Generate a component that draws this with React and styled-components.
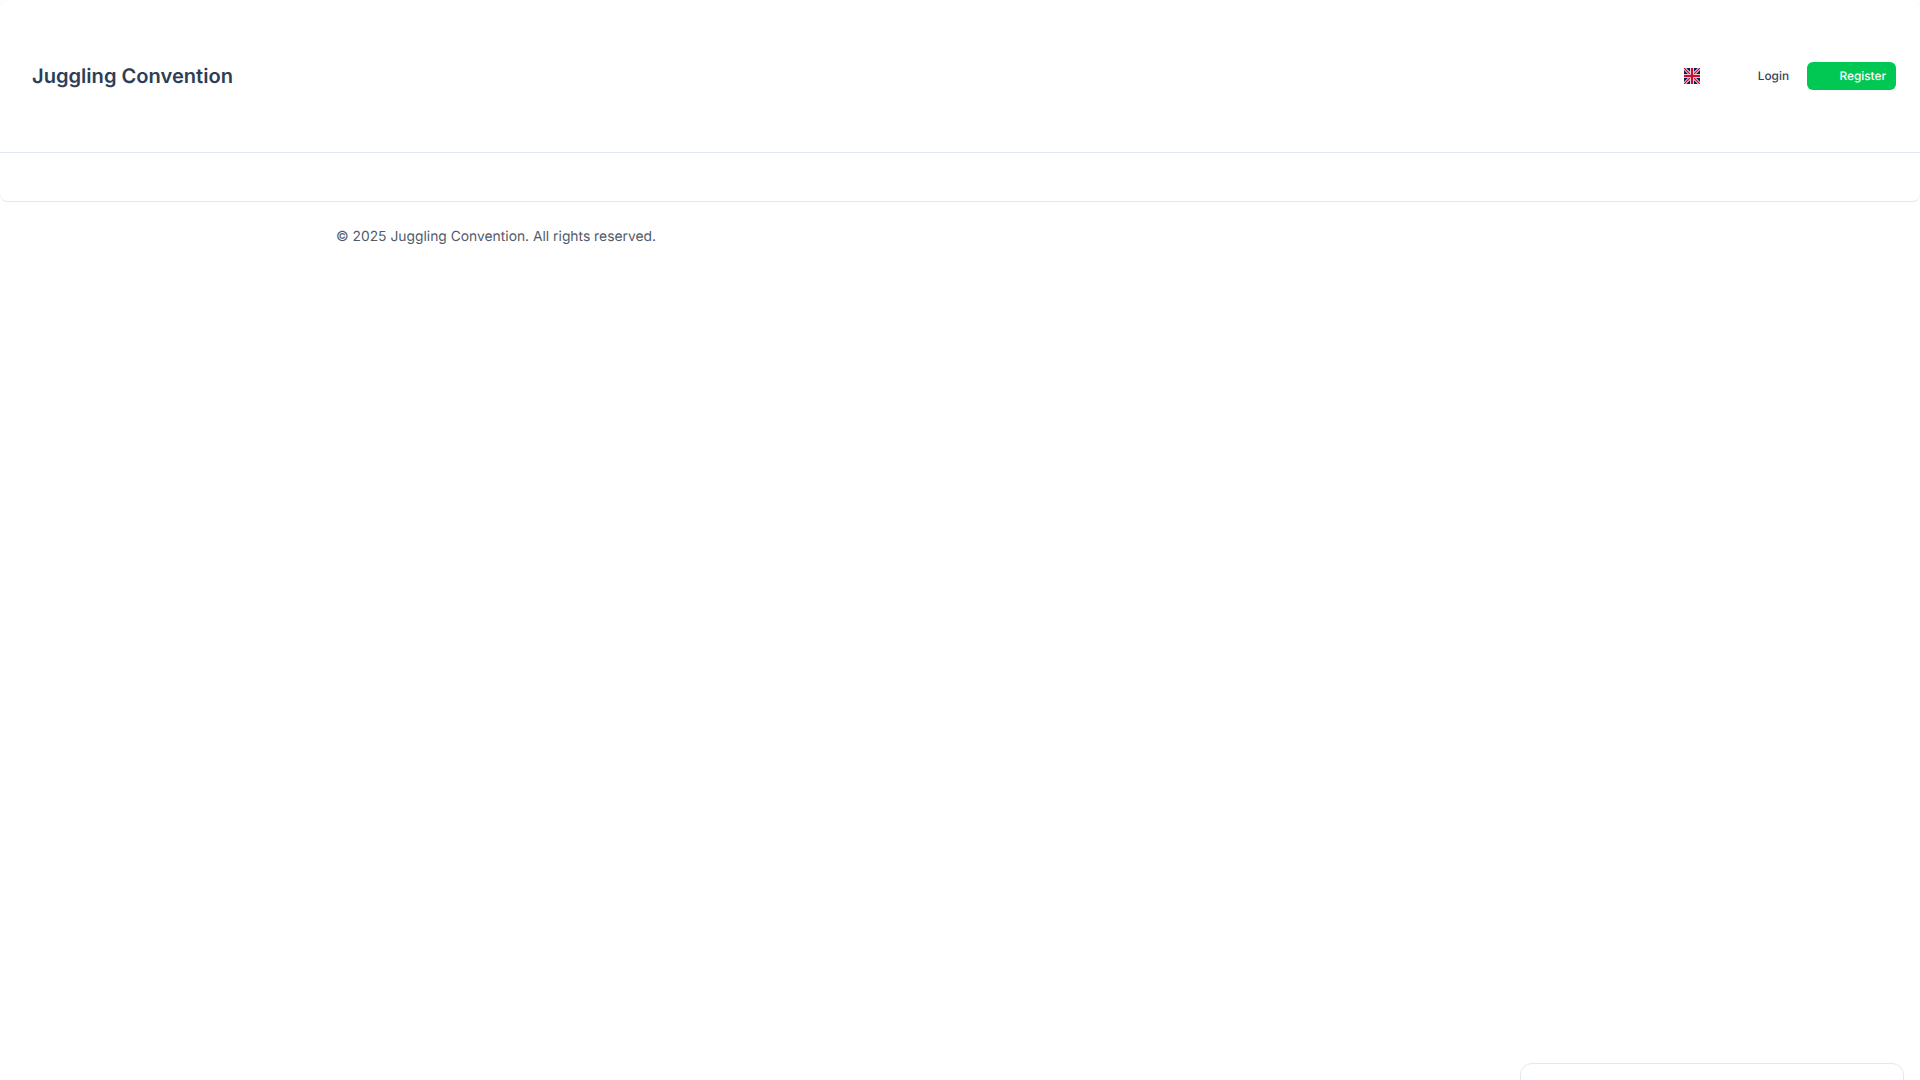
import React from 'react';
import styled, { createGlobalStyle } from 'styled-components';

const GlobalStyle = createGlobalStyle`
	html, body {
		margin: 0;
		height: 100%;
		overflow: hidden;
		background: #ffffff;
		font-family: 'Inter', 'Liberation Sans', sans-serif;
		text-rendering: geometricPrecision;
		-webkit-font-smoothing: antialiased;
	}
`;

const Header = styled.header`
	background: #ffffff;
	border-bottom: 1px solid #e5e7eb;
	border-radius: 8px;
	box-shadow: 0 0 1px rgba(203, 213, 225, 0.4);
`;

const TopBar = styled.div`
	height: 152px;
	display: flex;
	align-items: center;
	padding: 0 24px 0 32px;
	border-bottom: 1px solid #e2e8f0;
`;

const SubBar = styled.div`
	height: 48px;
`;

const Brand = styled.a`
	font-size: 20.1px;
	font-weight: 600;
	color: #2d3e56;
	margin-right: auto;
`;

const FlagButton = styled.span`
	display: flex;
	margin-right: 58px;
`;

const LoginLink = styled.a`
	font-size: 11.8px;
	font-weight: 500;
	color: #334155;
	margin-right: 18px;
	padding-bottom: 1px;
`;

const RegisterButton = styled.a`
	display: flex;
	align-items: center;
	justify-content: flex-end;
	width: 89px;
	height: 28px;
	box-sizing: border-box;
	padding: 0 10px 1px 0;
	background: #00c853;
	border-radius: 6px;
	color: #ffffff;
	font-size: 11.8px;
	font-weight: 500;
`;

const Footer = styled.footer`
	padding: 25px 336px;
`;

const Copyright = styled.p`
	margin: 0;
	font-size: 13.83px;
	line-height: 20px;
	color: #515b6b;
`;

const FloatingCard = styled.div`
	position: fixed;
	left: 1520px;
	top: 1063px;
	width: 384px;
	height: 60px;
	box-sizing: border-box;
	background: #ffffff;
	border: 1px solid #e5e7eb;
	border-radius: 12px;
`;

const UkFlag = () => (
	<svg width='16' height='16' viewBox='0 0 16 16'>
		<rect width='16' height='16' fill='#012169' />
		<path d='M0 0 16 16M16 0 0 16' stroke='#ffffff' strokeWidth='3' />
		<path d='M0 0 16 16M16 0 0 16' stroke='#c8102e' strokeWidth='1.4' />
		<path d='M8 0V16M0 8H16' stroke='#ffffff' strokeWidth='4' />
		<path d='M8 0V16M0 8H16' stroke='#c8102e' strokeWidth='2.4' />
	</svg>
);

const App = () => {
	return (
		<>
			<GlobalStyle />
			<Header>
				<TopBar>
					<Brand>Juggling Convention</Brand>
					<FlagButton>
						<UkFlag />
					</FlagButton>
					<LoginLink>Login</LoginLink>
					<RegisterButton>Register</RegisterButton>
				</TopBar>
				<SubBar />
			</Header>
			<Footer>
				<Copyright>© 2025 Juggling Convention. All rights reserved.</Copyright>
			</Footer>
			<FloatingCard />
		</>
	);
};

export default App;
